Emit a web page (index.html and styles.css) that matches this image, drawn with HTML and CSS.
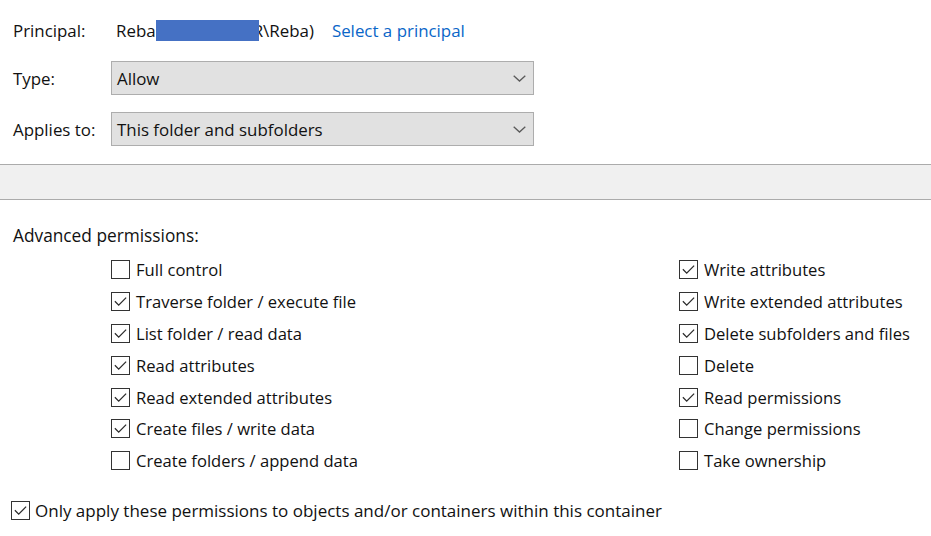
FILE: index.html
```html
<!DOCTYPE html>
<html lang="en">
<head>
<meta charset="utf-8">
<title>Permission Entry</title>
<link rel="stylesheet" href="styles.css">
</head>
<body>
<div class="top">
  <div class="row principal-row">
    <span class="label">Principal:</span>
    <span class="principal">Reba<span class="redact"></span>R\Reba)</span>
    <a class="link" href="#">Select a principal</a>
  </div>
  <div class="row select-row">
    <span class="label">Type:</span>
    <div class="select"><span>Allow</span><svg class="chev" width="13" height="7" viewBox="0 0 13 7"><polyline points="0.7,0.7 6.5,6 12.3,0.7" fill="none" stroke="#5a5a5a" stroke-width="1.3"/></svg></div>
  </div>
  <div class="row select-row second">
    <span class="label">Applies to:</span>
    <div class="select"><span>This folder and subfolders</span><svg class="chev" width="13" height="7" viewBox="0 0 13 7"><polyline points="0.7,0.7 6.5,6 12.3,0.7" fill="none" stroke="#5a5a5a" stroke-width="1.3"/></svg></div>
  </div>
</div>
<div class="band"></div>
<div class="adv-label">Advanced permissions:</div>
<div class="perms">
  <div class="col">
    <div class="cb"><span class="box"></span>Full control</div>
    <div class="cb"><span class="box on"><svg viewBox="0 0 19 19"><polyline points="3.2,9.2 7.5,13.6 15.8,5.2" fill="none" stroke="#2b2b2b" stroke-width="1.4"/></svg></span>Traverse folder / execute file</div>
    <div class="cb"><span class="box on"><svg viewBox="0 0 19 19"><polyline points="3.2,9.2 7.5,13.6 15.8,5.2" fill="none" stroke="#2b2b2b" stroke-width="1.4"/></svg></span>List folder / read data</div>
    <div class="cb"><span class="box on"><svg viewBox="0 0 19 19"><polyline points="3.2,9.2 7.5,13.6 15.8,5.2" fill="none" stroke="#2b2b2b" stroke-width="1.4"/></svg></span>Read attributes</div>
    <div class="cb"><span class="box on"><svg viewBox="0 0 19 19"><polyline points="3.2,9.2 7.5,13.6 15.8,5.2" fill="none" stroke="#2b2b2b" stroke-width="1.4"/></svg></span>Read extended attributes</div>
    <div class="cb"><span class="box on"><svg viewBox="0 0 19 19"><polyline points="3.2,9.2 7.5,13.6 15.8,5.2" fill="none" stroke="#2b2b2b" stroke-width="1.4"/></svg></span>Create files / write data</div>
    <div class="cb"><span class="box"></span>Create folders / append data</div>
  </div>
  <div class="col">
    <div class="cb"><span class="box on"><svg viewBox="0 0 19 19"><polyline points="3.2,9.2 7.5,13.6 15.8,5.2" fill="none" stroke="#2b2b2b" stroke-width="1.4"/></svg></span>Write attributes</div>
    <div class="cb"><span class="box on"><svg viewBox="0 0 19 19"><polyline points="3.2,9.2 7.5,13.6 15.8,5.2" fill="none" stroke="#2b2b2b" stroke-width="1.4"/></svg></span>Write extended attributes</div>
    <div class="cb"><span class="box on"><svg viewBox="0 0 19 19"><polyline points="3.2,9.2 7.5,13.6 15.8,5.2" fill="none" stroke="#2b2b2b" stroke-width="1.4"/></svg></span>Delete subfolders and files</div>
    <div class="cb"><span class="box"></span>Delete</div>
    <div class="cb"><span class="box on"><svg viewBox="0 0 19 19"><polyline points="3.2,9.2 7.5,13.6 15.8,5.2" fill="none" stroke="#2b2b2b" stroke-width="1.4"/></svg></span>Read permissions</div>
    <div class="cb"><span class="box"></span>Change permissions</div>
    <div class="cb"><span class="box"></span>Take ownership</div>
  </div>
</div>
<div class="cb only"><span class="box on"><svg viewBox="0 0 19 19"><polyline points="3.2,9.2 7.5,13.6 15.8,5.2" fill="none" stroke="#2b2b2b" stroke-width="1.4"/></svg></span>Only apply these permissions to objects and/or containers within this container</div>
</body>
</html>
```
FILE: styles.css
```css
html, body {
  margin: 0;
  padding: 0;
  background: #ffffff;
}
body {
  font-family: "Open Sans", "Noto Sans", sans-serif;
  font-size: 16.6px;
  color: #111;
  width: 931px;
  height: 536px;
  overflow: hidden;
}
.top {
  padding: 15px 0 0 13px;
  font-size: 16.9px;
}
.row {
  display: flex;
  align-items: center;
}
.label {
  width: 98px;
  flex: none;
}
.principal-row {
  height: 30px;
}
.principal {
  padding-left: 5px;
  display: inline-flex;
  align-items: center;
}
.redact {
  display: inline-block;
  width: 103px;
  height: 21px;
  background: #4571c4;
  margin-right: -6px;
  position: relative;
  z-index: 1;
}
.link {
  color: #0a66c8;
  text-decoration: none;
  margin-left: 18px;
}
.select-row {
  margin-top: 16px;
}
.select-row.second {
  margin-top: 17px;
}
.select {
  box-sizing: border-box;
  width: 423px;
  height: 34px;
  border: 1px solid #adadad;
  background: #e1e1e1;
  display: flex;
  align-items: center;
  justify-content: space-between;
  padding: 0 7px 0 5px;
}
.chev {
  display: block;
}
.band {
  margin-top: 18px;
  height: 34px;
  background: #f0f0f0;
  border-top: 1px solid #ababab;
  border-bottom: 1px solid #ababab;
}
.adv-label {
  margin: 24px 0 0 13px;
  height: 24px;
  line-height: 24px;
  font-size: 17.3px;
}
.perms {
  margin-top: 6px;
  padding-left: 111px;
  display: grid;
  grid-template-columns: 568px 1fr;
}
.cb {
  height: 31.8px;
  display: flex;
  align-items: center;
  white-space: nowrap;
}
.box {
  box-sizing: border-box;
  width: 19px;
  height: 19px;
  border: 1px solid #333;
  background: #fff;
  margin-right: 6px;
  flex: none;
  display: flex;
}
.box svg {
  width: 17px;
  height: 17px;
  display: block;
}
.cb.only {
  margin-top: 18px;
  padding-left: 11px;
  height: 32px;
  font-size: 17px;
}
.cb.only .box {
  margin-right: 5px;
}
```
